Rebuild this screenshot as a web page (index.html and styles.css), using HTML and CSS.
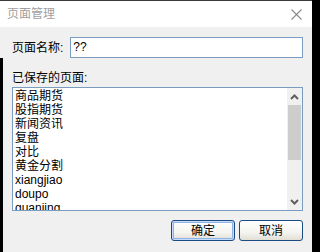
FILE: index.html
```html
<!DOCTYPE html>
<html>
<head>
<meta charset="utf-8">
<link rel="stylesheet" href="styles.css">
</head>
<body>
<div class="window">
  <div class="titlebar">
    <span class="title">页面管理</span>
    <svg class="close" width="11" height="11" viewBox="0 0 11 11"><path d="M0.5 0.5 L10.5 10.5 M10.5 0.5 L0.5 10.5" stroke="#8a8a8a" stroke-width="1.1" fill="none"/></svg>
  </div>
  <div class="content">
    <div class="name-row">
      <span class="label">页面名称:</span>
      <div class="input">??</div>
    </div>
    <div class="lower">
      <div class="label saved">已保存的页面:</div>
      <div class="listbox">
        <div class="items">
          <div>商品期货</div>
          <div>股指期货</div>
          <div>新闻资讯</div>
          <div>复盘</div>
          <div>对比</div>
          <div>黄金分割</div>
          <div>xiangjiao</div>
          <div>doupo</div>
          <div>guanjing</div>
        </div>
        <div class="scrollbar">
          <div class="arrow">
            <svg width="9" height="6" viewBox="0 0 9 6"><path d="M1 5 L4.5 1.5 L8 5" stroke="#606060" stroke-width="2" fill="none"/></svg>
          </div>
          <div class="thumb"></div>
          <div class="track"></div>
          <div class="arrow">
            <svg width="9" height="6" viewBox="0 0 9 6"><path d="M1 1 L4.5 4.5 L8 1" stroke="#606060" stroke-width="2" fill="none"/></svg>
          </div>
        </div>
      </div>
      <div class="buttons">
        <button class="btn default">确定</button>
        <button class="btn">取消</button>
      </div>
    </div>
  </div>
</div>
</body>
</html>
```

FILE: styles.css
```css
* { box-sizing: border-box; }
html, body {
  margin: 0;
  padding: 0;
  background: #000;
  width: 315px;
  height: 252px;
  overflow: hidden;
  font-family: "Liberation Sans", "Noto Sans CJK SC", sans-serif;
  font-size: 12px;
  color: #000;
}
.window {
  width: 312px;
  height: 252px;
  border-top: 1px solid #3a3a3a;
  background: #f0f0f0;
  display: flex;
  flex-direction: column;
}
.titlebar {
  height: 26px;
  background: #fff;
  display: flex;
  align-items: center;
  justify-content: space-between;
  padding: 0 10px 0 7px;
}
.title {
  color: #a0a0a0;
  line-height: 14px;
}
.close { display: block; }
.content {
  flex: 1;
  display: flex;
  flex-direction: column;
}
.name-row {
  display: flex;
  align-items: center;
  margin-top: 10px;
  padding: 0 9px 0 12px;
}
.label {
  line-height: 14px;
  white-space: nowrap;
}
.input {
  margin-left: 7px;
  flex: 1;
  height: 21px;
  background: #fff;
  border: 1px solid #7a9cbe;
  padding-left: 2px;
  line-height: 19px;
}
.lower {
  flex: 1;
  border-left: 3px solid #000;
  padding: 0 9px 0 9px;
  display: flex;
  flex-direction: column;
}
.saved { margin-top: 13px; }
.listbox {
  margin-top: 2px;
  height: 124px;
  background: #fff;
  border: 1px solid #7a9cbe;
  display: flex;
  overflow: hidden;
}
.items {
  flex: 1;
  padding: 1px 0 0 2px;
  line-height: 14px;
  overflow: hidden;
}
.scrollbar {
  width: 15px;
  background: #f0f0f0;
  display: flex;
  flex-direction: column;
}
.arrow {
  height: 17px;
  display: flex;
  align-items: center;
  justify-content: center;
}
.arrow svg { display: block; }
.thumb {
  height: 55px;
  margin: 0 1px;
  background: #cdcdcd;
}
.track { flex: 1; }
.buttons {
  margin-top: 9px;
  display: flex;
  justify-content: flex-end;
  gap: 4px;
}
.btn {
  width: 64px;
  height: 21px;
  border: 1px solid #1c4a82;
  border-radius: 3px;
  background: linear-gradient(#ffffff 0%, #f4f4f0 60%, #e2ded4 100%);
  font-family: "Liberation Sans", "Noto Sans CJK SC", sans-serif;
  font-size: 12px;
  line-height: 14px;
  color: #000;
  padding: 0;
}
.btn.default {
  border-color: #1c4a82;
  box-shadow: inset 0 0 0 1px #c4dcfa, inset 0 0 0 2px #8fb2e8;
}
```
